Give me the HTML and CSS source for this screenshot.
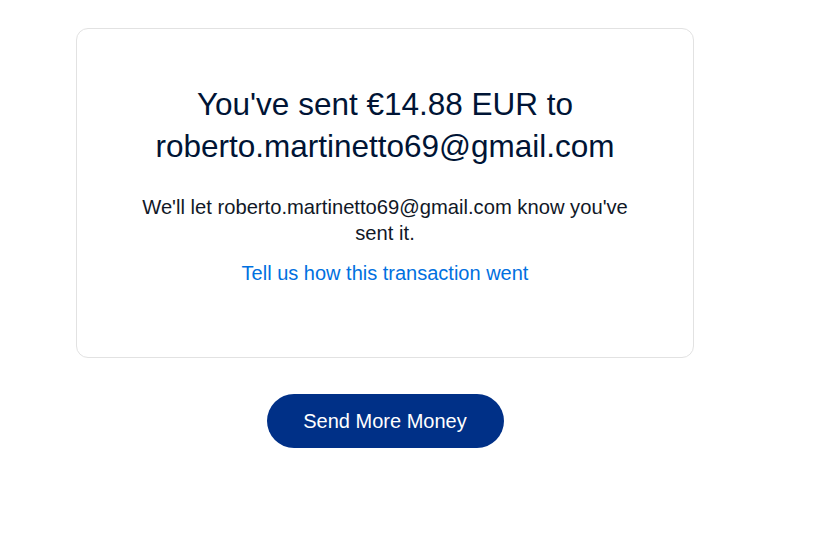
FILE: index.html
```html
<!DOCTYPE html>
<html lang="en">
<head>
<meta charset="utf-8">
<link rel="stylesheet" href="styles.css">
</head>
<body>
<main class="page">
  <section class="card">
    <h1 class="title">You've sent €14.88 EUR to roberto.martinetto69@gmail.com</h1>
    <p class="note">We'll let roberto.martinetto69@gmail.com know you've sent it.</p>
    <a class="feedback" href="#">Tell us how this transaction went</a>
  </section>
  <div class="actions">
    <button class="primary" type="button">Send More Money</button>
  </div>
</main>
</body>
</html>
```

FILE: styles.css
```css
html, body {
  margin: 0;
  padding: 0;
  background: #ffffff;
}
body {
  font-family: "Liberation Sans", Arial, sans-serif;
  color: #001435;
}
.page {
  width: 618px;
  padding: 28px 0 0 76px;
  display: flex;
  flex-direction: column;
}
.card {
  box-sizing: border-box;
  height: 330px;
  border: 1px solid #e2e2e2;
  border-radius: 12px;
  padding: 54px 52px 0;
  display: flex;
  flex-direction: column;
  align-items: center;
  text-align: center;
}
.title {
  margin: 0;
  font-size: 31.5px;
  font-weight: 400;
  line-height: 42px;
  color: #001435;
}
.note {
  margin: 27px 0 0;
  font-size: 20.2px;
  line-height: 26px;
  color: #111827;
}
.feedback {
  margin-top: 14px;
  font-size: 20px;
  line-height: 26px;
  color: #0070e0;
  text-decoration: none;
}
.actions {
  display: flex;
  justify-content: center;
  margin-top: 36px;
}
.primary {
  width: 237px;
  height: 54px;
  border: 0;
  border-radius: 27px;
  background: #003087;
  color: #ffffff;
  font-family: "Liberation Sans", Arial, sans-serif;
  font-size: 20px;
  padding: 0;
}
```
